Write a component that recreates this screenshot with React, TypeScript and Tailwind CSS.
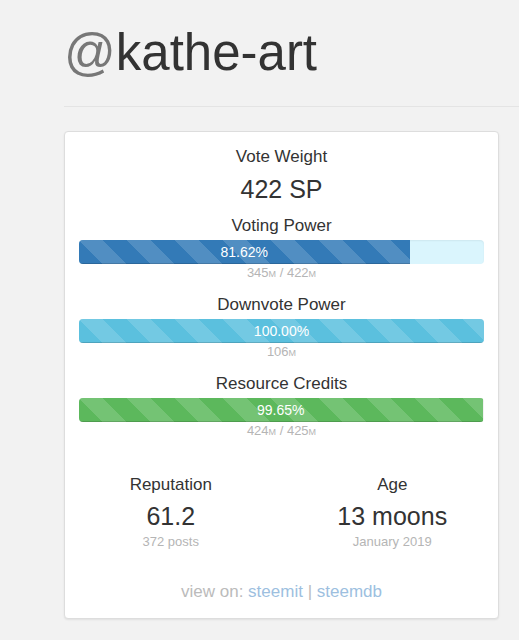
import React from "react";

type Bar = {
  label: string;
  pct: number;
  text: string;
  color: string;
  track: string;
  note: React.ReactNode;
};

const M = () => <span className="text-[9px]">M</span>;

const bars: Bar[] = [
  {
    label: "Voting Power",
    pct: 81.62,
    text: "81.62%",
    color: "bg-[#337ab7]",
    track: "bg-[#daf5fd]",
    note: (
      <>
        345<M /> / 422<M />
      </>
    ),
  },
  {
    label: "Downvote Power",
    pct: 100,
    text: "100.00%",
    color: "bg-[#5bc0de]",
    track: "bg-[#f5f5f5]",
    note: (
      <>
        106<M />
      </>
    ),
  },
  {
    label: "Resource Credits",
    pct: 99.65,
    text: "99.65%",
    color: "bg-[#5cb85c]",
    track: "bg-[#f5f5f5]",
    note: (
      <>
        424<M /> / 425<M />
      </>
    ),
  },
];

const ProgressRow: React.FC<{ bar: Bar; first?: boolean }> = ({ bar, first }) => {
  return (
    <div className={first ? "mt-[9px]" : "mt-[10px]"}>
      <div className="text-[17px] leading-[24px] text-[#333]">{bar.label}</div>
      <div
        className={`mt-[2px] h-[24px] rounded-[4px] overflow-hidden flex ${bar.track} shadow-[inset_0_1px_2px_rgba(0,0,0,0.06)]`}
      >
        <div
          className={`h-full ${bar.color} bg-[linear-gradient(45deg,rgba(255,255,255,.15)_25%,transparent_25%,transparent_50%,rgba(255,255,255,.15)_50%,rgba(255,255,255,.15)_75%,transparent_75%,transparent)] bg-[length:48px_48px] shadow-[inset_0_-1px_0_rgba(0,0,0,0.15)] text-white text-[14px] leading-[24px] text-center`}
          style={{ width: `${bar.pct}%` }}
        >
          {bar.text}
        </div>
      </div>
      <div className="text-[13px] leading-[18px] text-[#b5b5b5]">{bar.note}</div>
    </div>
  );
};

export default function App() {
  return (
    <div
      className="min-h-[640px] bg-[#f2f2f2] pl-[64px] pt-[27px]"
      style={{ fontFamily: '"Liberation Sans", Arial, sans-serif' }}
    >
      {/* header */}
      <h1 className="text-[51px] leading-none text-[#333] font-normal">
        <span className="text-[#777]">@</span>kathe-art
      </h1>
      <div className="mt-[28px] border-t border-[#e4e4e4]" />

      {/* stats card */}
      <div className="mt-[24px] w-[435px] bg-white border border-[#dddddd] rounded-[4px] shadow-[0_1px_2px_rgba(0,0,0,0.08)] px-[14px] pt-[13px] pb-[14px] text-center">
        <div className="text-[17px] leading-[24px] text-[#333]">Vote Weight</div>
        <div className="mt-[4px] text-[25px] leading-[32px] text-[#333]">422 SP</div>

        {bars.map((b, i) => (
          <ProgressRow key={b.label} bar={b} first={i === 0} />
        ))}

        <div className="grid grid-cols-2 -mx-[19px] mt-[32px]">
          <div>
            <div className="text-[17px] leading-[24px] text-[#333]">Reputation</div>
            <div className="mt-[3px] text-[25px] leading-[32px] text-[#333]">61.2</div>
            <div className="mt-[1px] text-[13px] leading-[18px] text-[#b5b5b5]">372 posts</div>
          </div>
          <div>
            <div className="text-[17px] leading-[24px] text-[#333]">Age</div>
            <div className="mt-[3px] text-[25px] leading-[32px] text-[#333]">13 moons</div>
            <div className="mt-[1px] text-[13px] leading-[18px] text-[#b5b5b5]">January 2019</div>
          </div>
        </div>

        <div className="mt-[29px] text-[17px] leading-[24px] text-[#bbbbbb]">
          view on: <a className="text-[#9dbfdf]">steemit</a> |{" "}
          <a className="text-[#9dbfdf]">steemdb</a>
        </div>
      </div>
    </div>
  );
}
